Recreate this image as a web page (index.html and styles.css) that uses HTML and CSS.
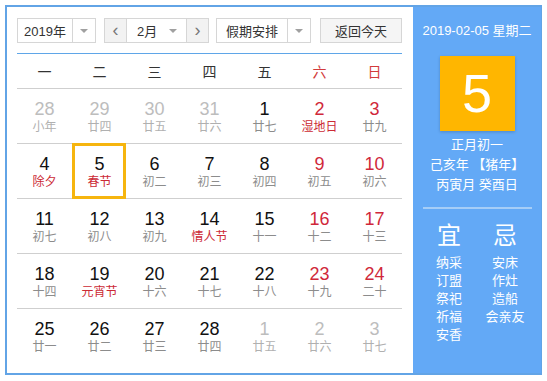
FILE: index.html
```html
<!DOCTYPE html>
<html lang="zh-CN">
<head>
    <meta charset="UTF-8">
    <title>万年历</title>
    <link rel="stylesheet" href="styles.css">
</head>
<body>
    <div class="calendar">
        <div class="cal-main">
            <div class="toolbar">
                <div class="select year-select">
                    <span class="select-text">2019年</span>
                    <span class="select-arrow"><i class="caret"></i></span>
                </div>
                <div class="month-group">
                    <span class="nav-btn">&lsaquo;</span>
                    <div class="month-select">
                        <span class="select-text">2月</span>
                        <i class="caret"></i>
                    </div>
                    <span class="nav-btn">&rsaquo;</span>
                </div>
                <div class="select holiday-select">
                    <span class="select-text">假期安排</span>
                    <span class="select-arrow"><i class="caret"></i></span>
                </div>
                <button class="today-btn">返回今天</button>
            </div>

            <div class="week-head">
                <span>一</span><span>二</span><span>三</span><span>四</span><span>五</span>
                <span class="red">六</span><span class="red">日</span>
            </div>

            <div class="days">
                <div class="week">
                    <div class="day other"><b>28</b><em>小年</em></div>
                    <div class="day other"><b>29</b><em>廿四</em></div>
                    <div class="day other"><b>30</b><em>廿五</em></div>
                    <div class="day other"><b>31</b><em>廿六</em></div>
                    <div class="day"><b>1</b><em>廿七</em></div>
                    <div class="day weekend"><b>2</b><em class="fest">湿地日</em></div>
                    <div class="day weekend"><b>3</b><em>廿九</em></div>
                </div>
                <div class="week">
                    <div class="day"><b>4</b><em class="fest">除夕</em></div>
                    <div class="day today"><b>5</b><em class="fest">春节</em></div>
                    <div class="day"><b>6</b><em>初二</em></div>
                    <div class="day"><b>7</b><em>初三</em></div>
                    <div class="day"><b>8</b><em>初四</em></div>
                    <div class="day weekend"><b>9</b><em>初五</em></div>
                    <div class="day weekend"><b>10</b><em>初六</em></div>
                </div>
                <div class="week">
                    <div class="day"><b>11</b><em>初七</em></div>
                    <div class="day"><b>12</b><em>初八</em></div>
                    <div class="day"><b>13</b><em>初九</em></div>
                    <div class="day"><b>14</b><em class="fest">情人节</em></div>
                    <div class="day"><b>15</b><em>十一</em></div>
                    <div class="day weekend"><b>16</b><em>十二</em></div>
                    <div class="day weekend"><b>17</b><em>十三</em></div>
                </div>
                <div class="week">
                    <div class="day"><b>18</b><em>十四</em></div>
                    <div class="day"><b>19</b><em class="fest">元宵节</em></div>
                    <div class="day"><b>20</b><em>十六</em></div>
                    <div class="day"><b>21</b><em>十七</em></div>
                    <div class="day"><b>22</b><em>十八</em></div>
                    <div class="day weekend"><b>23</b><em>十九</em></div>
                    <div class="day weekend"><b>24</b><em>二十</em></div>
                </div>
                <div class="week">
                    <div class="day"><b>25</b><em>廿一</em></div>
                    <div class="day"><b>26</b><em>廿二</em></div>
                    <div class="day"><b>27</b><em>廿三</em></div>
                    <div class="day"><b>28</b><em>廿四</em></div>
                    <div class="day other"><b>1</b><em>廿五</em></div>
                    <div class="day other"><b>2</b><em>廿六</em></div>
                    <div class="day other"><b>3</b><em>廿七</em></div>
                </div>
            </div>
        </div>

        <div class="cal-side">
            <div class="side-date">2019-02-05 星期二</div>
            <div class="side-day">5</div>
            <div class="side-lunar">
                <p>正月初一</p>
                <p>己亥年 【猪年】</p>
                <p>丙寅月 癸酉日</p>
            </div>
            <div class="side-line"></div>
            <div class="yiji">
                <div class="yiji-col">
                    <h3>宜</h3>
                    <p>纳采</p>
                    <p>订盟</p>
                    <p>祭祀</p>
                    <p>祈福</p>
                    <p>安香</p>
                </div>
                <div class="yiji-col">
                    <h3>忌</h3>
                    <p>安床</p>
                    <p>作灶</p>
                    <p>造船</p>
                    <p>会亲友</p>
                </div>
            </div>
        </div>
    </div>
</body>
</html>
```

FILE: styles.css
```css
body {
    margin: 5px;
    font-family: "Liberation Sans", "Noto Sans CJK SC", sans-serif;
    background: #fff;
}

.calendar {
    display: flex;
    width: 534px;
    height: 366px;
    border: 2px solid #62a4e6;
}

.cal-main {
    width: 385px;
    padding: 11px 11px 0 10px;
}

/* toolbar */
.toolbar {
    display: flex;
    align-items: center;
    height: 25px;
    margin-bottom: 10px;
    font-size: 13px;
    color: #333;
}

.select {
    display: flex;
    height: 23px;
    border: 1px solid #d6d6d6;
    background: #fff;
}

.select-text {
    display: flex;
    align-items: center;
    justify-content: center;
    border-right: 1px solid #d6d6d6;
}

.select-arrow {
    display: flex;
    align-items: center;
    justify-content: center;
    flex: 1;
}

.caret {
    display: inline-block;
    width: 0;
    height: 0;
    border-left: 4px solid transparent;
    border-right: 4px solid transparent;
    border-top: 4px solid #a0a0a0;
}

.year-select {
    width: 77px;
}

.year-select .select-text {
    width: 54px;
}

.month-group {
    display: flex;
    height: 23px;
    margin-left: 8px;
    border: 1px solid #d6d6d6;
}

.nav-btn {
    display: flex;
    align-items: center;
    justify-content: center;
    width: 21px;
    background: #f2f2f2;
    color: #777;
    font-size: 18px;
    line-height: 1;
    padding-bottom: 2px;
    box-sizing: border-box;
}

.month-select {
    display: flex;
    align-items: center;
    justify-content: space-between;
    width: 61px;
    padding: 0 9px 0 10px;
    box-sizing: border-box;
    border-left: 1px solid #d6d6d6;
    border-right: 1px solid #d6d6d6;
}

.month-select .select-text {
    border-right: none;
}

.holiday-select {
    width: 93px;
    margin-left: 7px;
}

.holiday-select .select-text {
    width: 70px;
}

.today-btn {
    margin-left: auto;
    width: 82px;
    height: 25px;
    border: 1px solid #d6d6d6;
    background: #f5f5f5;
    font-family: inherit;
    font-size: 13px;
    color: #333;
    padding: 0;
}

/* week header */
.week-head {
    display: grid;
    grid-template-columns: repeat(7, 55px);
    height: 34px;
    align-items: center;
    border-top: 1px solid #5fa6e8;
    border-bottom: 1px solid #cfcfcf;
    font-size: 14px;
    color: #333;
    text-align: center;
}

.week-head .red {
    color: #d23b3b;
}

/* day grid */
.week {
    display: grid;
    grid-template-columns: repeat(7, 55px);
    height: 54px;
    border-bottom: 1px solid #cfcfcf;
}

.week:last-child {
    border-bottom: none;
}

.day {
    position: relative;
    padding-top: 10px;
    text-align: center;
}

.day b {
    display: block;
    font-weight: normal;
    font-size: 18px;
    line-height: 20px;
    color: #111;
}

.day em {
    display: block;
    font-style: normal;
    font-size: 12px;
    line-height: 16px;
    color: #8c8c8c;
}

.day.weekend b {
    color: #d0283a;
}

.day em.fest {
    color: #cc2a35;
}

.day.other b {
    color: #bdbdbd;
}

.day.other em {
    color: #b0b0b0;
}

.day.today::after {
    content: "";
    position: absolute;
    top: -1px;
    bottom: -1px;
    left: 0;
    right: 1px;
    border: 3px solid #f6b50e;
}

/* side panel */
.cal-side {
    flex: 1;
    background: #63a9f6;
    color: #fff;
    text-align: center;
}

.side-date {
    margin-top: 16px;
    font-size: 13px;
    line-height: 16px;
}

.side-day {
    width: 75px;
    height: 75px;
    margin: 17px auto 0;
    background: #ffb600;
    box-shadow: 0 1px 3px rgba(0, 0, 0, 0.2);
    font-size: 54px;
    line-height: 75px;
}

.side-lunar {
    margin-top: 4px;
    font-size: 13px;
    line-height: 20px;
}

.side-lunar p {
    margin: 0;
}

.side-line {
    height: 2px;
    margin: 12px 9px 0 10px;
    background: #a5cdf7;
}

.yiji {
    display: flex;
    justify-content: center;
    gap: 12px;
    margin-top: 12px;
}

.yiji-col {
    width: 44px;
}

.yiji-col h3 {
    margin: 0 0 3px;
    font-size: 24px;
    font-weight: normal;
    line-height: 30px;
}

.yiji-col p {
    margin: 0;
    font-size: 13px;
    line-height: 18px;
}
```
